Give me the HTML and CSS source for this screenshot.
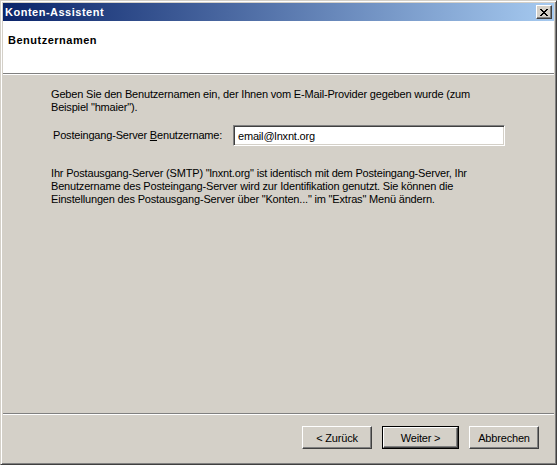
FILE: index.html
```html
<!DOCTYPE html>
<html lang="de">
<head>
<meta charset="utf-8">
<title>Konten-Assistent</title>
<link rel="stylesheet" href="styles.css">
</head>
<body>
<div class="window">
  <div class="titlebar">
    <span class="title">Konten-Assistent</span>
    <span class="close" aria-label="Schließen">
      <svg width="8" height="7" viewBox="0 0 8 7" shape-rendering="crispEdges">
        <path d="M0 0h2v1H0zM6 0h2v1H6zM1 1h2v1H1zM5 1h2v1H5zM2 2h4v1H2zM3 3h2v1H3zM2 4h4v1H2zM1 5h2v1H1zM5 5h2v1H5zM0 6h2v1H0zM6 6h2v1H6z" fill="#000"/>
      </svg>
    </span>
  </div>
  <div class="header">
    <h1 class="heading">Benutzernamen</h1>
  </div>
  <div class="content">
    <p class="text">Geben Sie den Benutzernamen ein, der Ihnen vom E-Mail-Provider gegeben wurde (zum<br>Beispiel "hmaier").</p>
    <div class="field-row">
      <label class="label">Posteingang-Server <u>B</u>enutzername:</label>
      <div class="textbox">email@lnxnt.org</div>
    </div>
    <p class="text text-second">Ihr Postausgang-Server (SMTP) "lnxnt.org" ist identisch mit dem Posteingang-Server, Ihr<br>Benutzername des Posteingang-Server wird zur Identifikation genutzt. Sie können die<br>Einstellungen des Postausgang-Server über "Konten..." im "Extras" Menü ändern.</p>
  </div>
  <div class="footer">
    <span class="btn btn-back">&lt; Zurück</span>
    <span class="btn-default"><span class="btn btn-next">Weiter &gt;</span></span>
    <span class="btn btn-cancel">Abbrechen</span>
  </div>
</div>
</body>
</html>
```

FILE: styles.css
```css
html, body {
  margin: 0;
  padding: 0;
  background: #d4d0c8;
}

.window {
  box-sizing: border-box;
  width: 557px;
  height: 465px;
  background: #d4d0c8;
  border-top: 1px solid #d4d0c8;
  border-left: 1px solid #d4d0c8;
  border-right: 1px solid #404040;
  border-bottom: 1px solid #404040;
  box-shadow: inset 1px 1px 0 #ffffff, inset -1px -1px 0 #808080;
  padding: 2px;
  display: flex;
  flex-direction: column;
  font-family: "Liberation Sans", "DejaVu Sans", sans-serif;
  font-size: 11px;
  letter-spacing: -0.18px;
  color: #000;
}

.titlebar {
  height: 18px;
  flex: none;
  display: flex;
  align-items: center;
  justify-content: space-between;
  padding: 0 2px 0 2px;
  background: linear-gradient(to right, #0a246a, #a6caf0);
}

.title {
  color: #fff;
  font-weight: bold;
  font-size: 11px;
  letter-spacing: 0.5px;
}

.close {
  box-sizing: border-box;
  width: 16px;
  height: 14px;
  background: #d4d0c8;
  border-top: 1px solid #ffffff;
  border-left: 1px solid #ffffff;
  border-right: 1px solid #404040;
  border-bottom: 1px solid #404040;
  box-shadow: inset -1px -1px 0 #808080;
  display: flex;
  align-items: center;
  justify-content: center;
  padding-right: 1px;
}

.header {
  flex: none;
  height: 52px;
  background: #fff;
  border-bottom: 1px solid #808080;
  box-shadow: 0 1px 0 #ffffff;
  display: flex;
  align-items: flex-start;
  padding: 0 5px;
}

.heading {
  margin: 13px 0 0 0;
  font-size: 11px;
  font-weight: bold;
  line-height: 13px;
  letter-spacing: 0.5px;
}

.content {
  flex: 1;
  padding: 13px 0 0 48px;
  margin-top: 1px;
}

.text {
  margin: 0;
  line-height: 13px;
  white-space: nowrap;
}

.text-second {
  margin-top: 21px;
}

.field-row {
  display: flex;
  align-items: center;
  margin-top: 11px;
  padding-left: 2px;
}

.label {
  flex: none;
  width: 180px;
  white-space: nowrap;
  line-height: 13px;
}

.textbox {
  box-sizing: border-box;
  flex: none;
  width: 272px;
  height: 21px;
  background: #fff;
  border-top: 1px solid #808080;
  border-left: 1px solid #808080;
  border-right: 1px solid #ffffff;
  border-bottom: 1px solid #ffffff;
  box-shadow: inset 1px 1px 0 #404040, inset -1px -1px 0 #d4d0c8;
  padding: 0 4px;
  display: flex;
  align-items: center;
}

.footer {
  box-sizing: border-box;
  flex: none;
  height: 49px;
  border-top: 1px solid #808080;
  box-shadow: inset 0 1px 0 #ffffff;
  display: flex;
  align-items: flex-start;
  justify-content: flex-end;
  padding: 12px 15px 0 0;
  gap: 10px;
}

.btn {
  box-sizing: border-box;
  height: 23px;
  background: #d4d0c8;
  border-top: 1px solid #ffffff;
  border-left: 1px solid #ffffff;
  border-right: 1px solid #404040;
  border-bottom: 1px solid #404040;
  box-shadow: inset -1px -1px 0 #808080;
  display: flex;
  align-items: center;
  justify-content: center;
}

.btn-back { width: 70px; }
.btn-cancel { width: 70px; }

.btn-default {
  display: flex;
  border: 1px solid #000;
  height: 23px;
  box-sizing: border-box;
}

.btn-default .btn {
  width: 75px;
  height: 21px;
}
```
